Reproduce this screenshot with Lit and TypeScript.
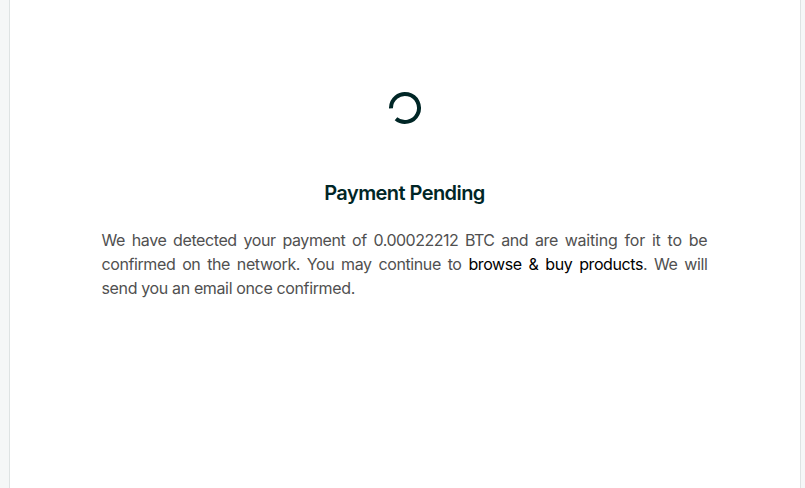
import { LitElement, html, css } from "lit";
import { customElement } from "lit/decorators.js";

@customElement("app-root")
export class AppRoot extends LitElement {
  static styles = css`
    :host { display: block; height: 488px; background: #f5f7f7; overflow: hidden;
      font-family: "Inter", "Open Sans", sans-serif; }
    .card { box-sizing: border-box; width: 792px; height: 488px; margin-left: 9px;
      padding: 91px 92px 0 91px; border: solid #dee3e3; border-width: 0 1px;
      background: #fff; display: flex; flex-direction: column; align-items: center; }
    .spinner { display: block; width: 34px; height: 34px; }
    h1 { margin: 54px 0 0; font-size: 20px; line-height: 28px; font-weight: 600;
      letter-spacing: -0.57px; color: #002626; white-space: nowrap; }
    .message { width: 606px; margin: 21px 0 0; font-size: 16px; line-height: 24px; color: #505050; letter-spacing: -0.4px; }
    .line { text-align: justify; text-align-last: justify; white-space: nowrap; display: block; }
    .tight { letter-spacing: -0.5px; }
    .loose { letter-spacing: -0.2px; }
    .last { text-align-last: left; letter-spacing: -0.36px; }
    a { color: #000; text-decoration: none; }
  `;
  render() {
    return html`<main class="card">
      <svg class="spinner" viewBox="0 0 34 34" fill="none" aria-label="Loading">
        <path d="M3 17.4A14 14 0 1 1 8 27.7" stroke="#002626" stroke-width="4"></path>
      </svg>
      <h1>Payment Pending</h1>
      <p class="message">
        <span class="line">We have detected your payment of <span class="tight">0.00022212 BTC</span> and are <span class="loose">waiting for it to be</span></span>
        <span class="line">confirmed on the network. You may continue to <a>browse &amp; buy products</a>. We will</span>
        <span class="line last">send you an email once confirmed.</span>
      </p>
    </main>`;
  }
}
